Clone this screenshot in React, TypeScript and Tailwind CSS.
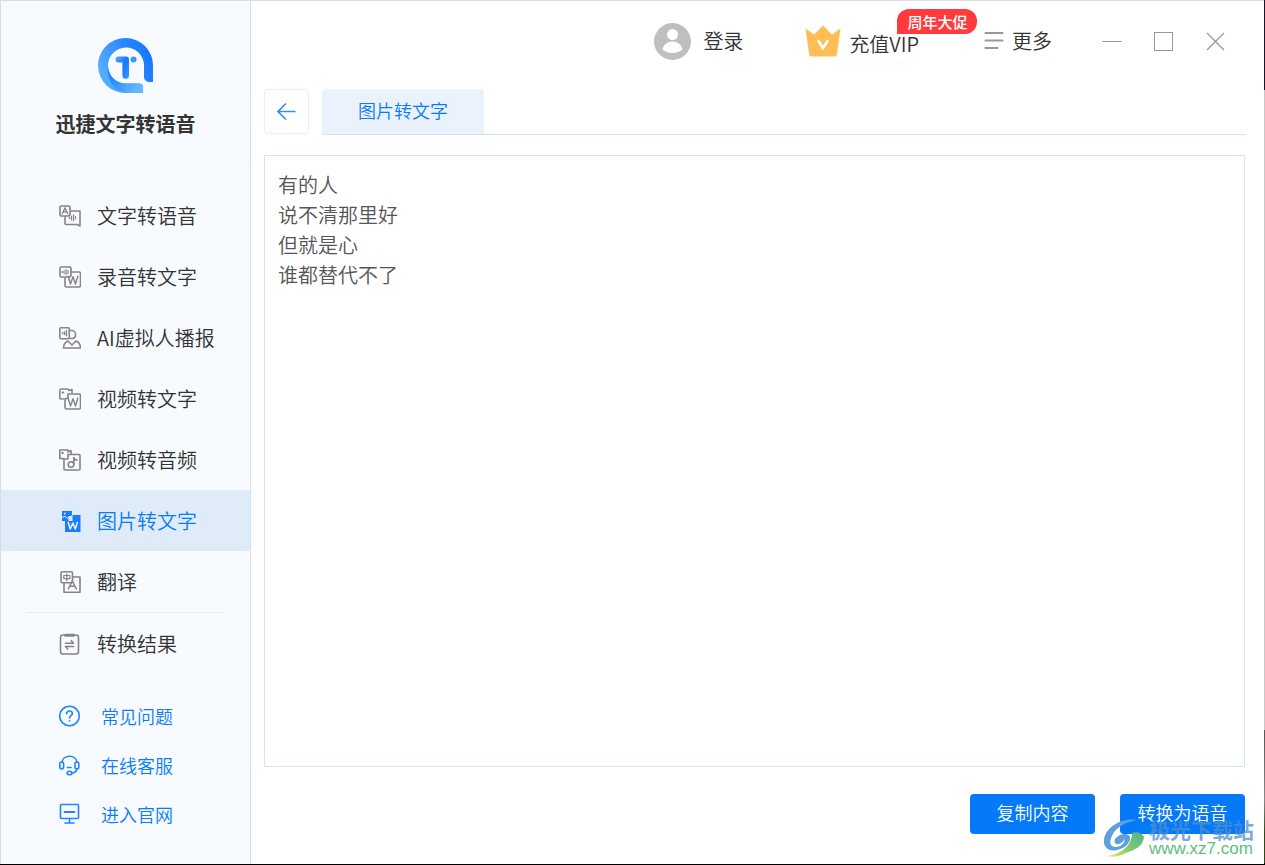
import React, { useState } from "react"

type IconProps = { children: React.ReactNode; className?: string }

const Glyph = ({ children, className = "text-[#858585]" }: IconProps) => (
  <svg
    viewBox="0 0 22 22"
    className={`size-[22px] shrink-0 ${className}`}
    fill="none"
    stroke="currentColor"
    strokeWidth="1.6"
    strokeLinejoin="round"
    strokeLinecap="round"
    aria-hidden="true"
  >
    {children}
  </svg>
)

const W_MARK = "M9.2 10.200l2.300 7.800 2.500-7.300 2.500 7.300 2.300-7.800"

const SpeechIcon = () => (
  <Glyph>
    <path d="M11 5V2a1 1 0 0 0-1-1H2a1 1 0 0 0-1 1v8a1 1 0 0 0 1 1h3" />
    <path d="M11 6h10v15l-3-1.500H7a1 1 0 0 1-1-1V11h3a2 2 0 0 0 2-2z" />
    <path d="M3.300 8.700L6 2.800l2.700 5.900M4.500 6.900h3" strokeWidth="1.300" />
    <path d="M10.500 12v1.500M12.500 11v4M14.500 9.800v6M16.500 11.500v2.500" strokeWidth="1.200" />
  </Glyph>
)

const RecordIcon = () => (
  <Glyph>
    <path d="M12 6V2a1 1 0 0 0-1-1H2a1 1 0 0 0-1 1v8a1 1 0 0 0 1 1h3" />
    <path d="M12 6h8a1.500 1.500 0 0 1 1.500 1.500v12A1.500 1.500 0 0 1 20 21H7.500A1.500 1.500 0 0 1 6 19.500V11h4a2 2 0 0 0 2-2z" />
    <path d="M3 5.500v1M5 4.500v3M7 3.500v5M9 4.500v3" strokeWidth="1.200" />
    <path d={W_MARK} strokeWidth="1.400" />
  </Glyph>
)

const AvatarIcon = () => (
  <Glyph>
    <rect x="0.800" y="0.800" width="9.500" height="11" rx="1" />
    <path d="M11 3.500h2a4 4 0 0 1 3.500 4.300c0 2.200-1.500 3.700-3.500 3.700h-2" />
    <path d="M4.500 21c0-3 2-6 4.500-7l4 4 4-4c2.500 1 4.500 4 4.500 7z" />
    <path d="M3.500 5.800v1M5.500 5v2.600M7.500 3.800v5" strokeWidth="1.400" />
  </Glyph>
)

const VideoTextIcon = () => (
  <Glyph>
    <path d="M4.500 11H2a1.500 1.500 0 0 1-1.200-1.500v-7A1.500 1.500 0 0 1 2.300 1h6A1.500 1.500 0 0 1 9.800 2.500L13 1.500V5" />
    <path d="M6 11l3-1V6h11a1.500 1.500 0 0 1 1.500 1.500v12A1.500 1.500 0 0 1 20 21H7.500A1.500 1.500 0 0 1 6 19.500z" />
    <path d="M3.500 4.500h.8" strokeWidth="2" />
    <path d={W_MARK} strokeWidth="1.400" />
  </Glyph>
)

const VideoAudioIcon = () => (
  <Glyph>
    <path d="M4 9.500H.800V1H9v2l3-1.500V5" />
    <path d="M4 10h5V5.500h11a1 1 0 0 1 1 1V20a1 1 0 0 1-1 1H6a1 1 0 0 1-1-1V10" />
    <path d="M3.200 4h.8" strokeWidth="1.800" />
    <circle cx="12" cy="15.500" r="2.800" />
    <path d="M14.800 15.500V8.500c.5 1.500 1.500 2.500 3.200 2.800" />
  </Glyph>
)

const PictureIcon = () => (
  <Glyph className="text-[#1a7cff]">
    <path d="M3 1h10v5H9.500v5H3z" fill="currentColor" stroke="none" />
    <path d="M13.500 5H21.500v17H6V11h7.500z" fill="currentColor" stroke="none" />
    <path d="M3 7.500l3-1.200 2.500 2 4-2.300" stroke="#dfebf8" strokeWidth="1" />
    <circle cx="5.800" cy="3.500" r=".9" fill="#dfebf8" stroke="none" />
    <path d="M9.300 12.500l2 6.500 2.500-6 2.500 6 2-6.500" stroke="#e8f1ff" strokeWidth="1.600" />
  </Glyph>
)

const TranslateIcon = () => (
  <Glyph>
    <rect x="2" y=".8" width="11.500" height="11" rx="1.500" />
    <path d="M13.500 6H21v15.200H5V12" />
    <path d="M4.800 4.500h6v3.200h-6zM7.800 2.800v7" strokeWidth="1.200" />
    <path d="M9.300 17.800L13.300 10l4 7.800M11 15.300h4.800" strokeWidth="1.500" />
  </Glyph>
)

const ResultIcon = () => (
  <Glyph>
    <rect x="1.500" y="2" width="18" height="19" rx="2.500" />
    <path d="M6.500 2.300h8" strokeWidth="3" />
    <path d="M6.500 10.200h8l-2.200-2.500M14.500 13.500h-8l2.200 2.500" />
  </Glyph>
)

const HelpIcon = () => (
  <Glyph className="text-[#2084fa]">
    <circle cx="10.500" cy="11" r="9.800" />
    <path d="M7.600 8.800c0-1.700 1.300-2.800 2.900-2.800s2.900 1.100 2.900 2.700c0 1.900-2.900 2.100-2.900 4.300M10.500 15.800v.2" />
  </Glyph>
)

const ServiceIcon = () => (
  <Glyph className="text-[#2084fa]">
    <path d="M3 8a7.600 6.800 0 0 1 15 0M18 15c-.8 2.500-2.800 4-5 4.300" />
    <rect x=".8" y="8" width="3.800" height="7" rx="1.900" />
    <rect x="16" y="8" width="3.800" height="7" rx="1.900" />
    <path d="M8.500 13.500h3.500" />
    <ellipse cx="10.500" cy="19" rx="2.300" ry="1.800" />
  </Glyph>
)

const SiteIcon = () => (
  <Glyph className="text-[#2084fa]">
    <rect x="1.500" y="1.500" width="18" height="14" rx="1" />
    <path d="M5.500 9h10" strokeWidth="1.800" />
    <path d="M10.500 15.500v4M6 20h9" />
  </Glyph>
)

const navItems = [
  { label: "文字转语音", Icon: SpeechIcon },
  { label: "录音转文字", Icon: RecordIcon },
  { label: "AI虚拟人播报", Icon: AvatarIcon },
  { label: "视频转文字", Icon: VideoTextIcon },
  { label: "视频转音频", Icon: VideoAudioIcon },
  { label: "图片转文字", Icon: PictureIcon },
  { label: "翻译", Icon: TranslateIcon },
  { label: "转换结果", Icon: ResultIcon },
]

const helpLinks = [
  { label: "常见问题", Icon: HelpIcon },
  { label: "在线客服", Icon: ServiceIcon },
  { label: "进入官网", Icon: SiteIcon },
]

const Logo = () => (
  <svg viewBox="0 0 56 56" className="size-14" aria-hidden="true">
    <defs>
      <linearGradient id="ring" x1="0" y1="0.700" x2="1" y2="0.300">
        <stop offset="0" stopColor="#5db4ff" />
        <stop offset="0.600" stopColor="#2c86ff" />
        <stop offset="1" stopColor="#1577ff" />
      </linearGradient>
      <linearGradient id="tail" x1="0" y1="0" x2="1" y2="0.400">
        <stop offset="0" stopColor="#1577ff" />
        <stop offset="1" stopColor="#62b8ff" />
      </linearGradient>
      <linearGradient id="stem" x1="0" y1="0" x2="1" y2="1">
        <stop offset="0" stopColor="#55a8ff" />
        <stop offset="0.500" stopColor="#1577ff" />
        <stop offset="1" stopColor="#3f97ff" />
      </linearGradient>
    </defs>
    <path
      d="M55 44h-4a5 5 0 0 1-5-5V27A18 18 0 1 0 28 45.500h13a4 4 0 0 1 4 4V55H28A27.500 27.500 0 1 1 55 28z"
      fill="url(#ring)"
    />
    <path d="M10 29c1 10 8 16.500 18 16.500h13a4 4 0 0 1 4 4V55H28C16 53 9 42 10 29z" fill="url(#tail)" />
    <path d="M20.500 18.500H28a3 3 0 0 1 3 3v16a3.300 3.300 0 0 1-6.600 0v-13h-3.900a3 3 0 0 1 0-6z" fill="url(#stem)" />
    <circle cx="35.500" cy="21.500" r="3" fill="#3d95ff" />
  </svg>
)

const Sidebar = ({ active, onSelect }: { active: string; onSelect: (label: string) => void }) => (
  <aside className="flex w-[250px] shrink-0 flex-col border-r border-[#cfe3f8] bg-[#f7faff]">
    <div className="flex flex-col items-center pt-[37px]">
      <Logo />
      <h1 className="mt-[14px] text-xl leading-8 font-bold text-[#333]">迅捷文字转语音</h1>
    </div>

    <nav className="mt-[45px] flex h-[489px] shrink-0 flex-col">
      {navItems.map(({ label, Icon }) => (
        <React.Fragment key={label}>
          {label === "转换结果" && <hr className="mx-[25px] border-[#e1edfb]" />}
          <button
            type="button"
            onClick={() => onSelect(label)}
            className={`flex flex-1 items-center gap-4 pl-[58px] text-xl ${
              label === active ? "bg-[#dfebf8] text-[#0a7cf8]" : "text-[#333]"
            }`}
          >
            <Icon />
            {label}
          </button>
        </React.Fragment>
      ))}
    </nav>

    <div className="mt-[17px] flex flex-col text-lg text-[#0a7cf8]">
      {helpLinks.map(({ label, Icon }) => (
        <a key={label} href="#" className="flex h-[49px] items-center gap-5 pl-[58px]">
          <Icon />
          {label}
        </a>
      ))}
    </div>
  </aside>
)

const TopBar = () => (
  <header className="flex h-20 items-center justify-end pr-[38px] text-xl text-[#333]">
    <button type="button" className="flex items-center gap-3">
      <svg viewBox="0 0 37 37" className="size-[37px]" aria-hidden="true">
        <circle cx="18.500" cy="18.500" r="18.500" fill="#bfbfbf" />
        <circle cx="18.500" cy="11.500" r="5.500" fill="#fff" />
        <path d="M8.500 26.500c1-5 5-8 10-8s9 3 10 8c-5 4.500-15 4.500-20 0z" fill="#fff" />
      </svg>
      登录
    </button>

    <button type="button" className="relative ml-[62px] flex items-start gap-2">
      <svg viewBox="0 0 36 32" className="h-8 w-9" aria-hidden="true">
        <path
          d="M.5 3.500l8.500 6L18 .5l9 9 8.500-6-3.500 25a3 3 0 0 1-3 3H7a3 3 0 0 1-3-3z"
          fill="#ffbe55"
        />
        <path d="M13.500 16l4.500 7 4.500-7" fill="none" stroke="#fff" strokeWidth="2.600" strokeLinecap="round" />
      </svg>
      <span className="pt-[5px]">充值VIP</span>
      <span className="absolute bottom-6 left-[92px] rounded-xl rounded-bl-none bg-[#ff3b3e] px-[10px] text-[15px] leading-[25px] font-medium whitespace-nowrap text-white">
        周年大促
      </span>
    </button>

    <button type="button" className="ml-[65px] flex items-center gap-2">
      <svg viewBox="0 0 20 20" className="size-5" stroke="#999" strokeWidth="2.200" strokeLinecap="round" aria-hidden="true">
        <path d="M1.500 2h17M1.500 9.500h17M1.500 17h12" />
      </svg>
      更多
    </button>

    <div className="ml-[50px] flex items-center gap-8">
      <button type="button" aria-label="最小化">
        <svg viewBox="0 0 20 20" className="size-5" stroke="#999" aria-hidden="true">
          <path d="M.5 10.500h19" />
        </svg>
      </button>
      <button type="button" aria-label="最大化">
        <svg viewBox="0 0 20 20" className="size-5" fill="none" stroke="#999" aria-hidden="true">
          <rect x=".5" y="1.500" width="18" height="18" />
        </svg>
      </button>
      <button type="button" aria-label="关闭">
        <svg viewBox="0 0 20 20" className="size-5" stroke="#999" strokeWidth="1.300" aria-hidden="true">
          <path d="M1 2l17 17M18 2L1 19" />
        </svg>
      </button>
    </div>
  </header>
)

const SiteMark = () => (
  <div className="pointer-events-none absolute right-[10px] bottom-[5px] flex items-end gap-1">
    <svg viewBox="0 0 42 40" className="h-10 w-[42px]" aria-hidden="true">
      <defs>
        <linearGradient id="swirl" x1="0.900" y1="0" x2="0.100" y2="1">
          <stop offset="0" stopColor="#54b48c" />
          <stop offset="0.600" stopColor="#84cc6c" />
          <stop offset="1" stopColor="#e8e36a" />
        </linearGradient>
      </defs>
      <path
        d="M34 1C18-2 2 9 1 21c-1 8 6 12 13 10 9-2 14-8 13-13-1-4-9-4-13 0-4 3-3 8 2 7 3-1 5-3 5-5 2 3-3 8-8 8-6 0-7-5-4-11C12 9 22 3 34 1z"
        fill="#619fdc"
      />
      <path d="M4 37c15-2 25-11 25-23 5-2 10 0 12 4-1 10-10 13-18 16-6 3-12 5-19 3z" fill="url(#swirl)" />
    </svg>
    <div className="flex flex-col">
      <span className="text-[21px] leading-5 font-bold text-[#4f8fd0]/75">极光下载站</span>
      <span className="font-['Liberation_Sans',sans-serif] text-[17px] leading-5 text-[#5cc080]">www.xz7.com</span>
    </div>
  </div>
)

const App = () => {
  const [active, setActive] = useState("图片转文字")
  const [text, setText] = useState("有的人\n说不清那里好\n但就是心\n谁都替代不了")

  return (
    <div className="h-screen bg-[linear-gradient(#14182a_90px,#c8c8c8_90px,#c8c8c8_730px,#555_730px,#888_800px,#2a4a12_834px,#2a4a12_863px,#000_863px)] pr-px pb-px font-['Noto_Sans_CJK_SC',sans-serif] font-[350]">
      <div className="relative flex h-full border-t border-l border-[#dcdcdc] bg-white">
        <Sidebar active={active} onSelect={setActive} />

        <main className="flex min-w-0 flex-1 flex-col">
          <TopBar />

          <div className="mt-2 flex gap-[13px] pr-[18px] pl-[13px]">
            <button
              type="button"
              aria-label="返回"
              className="flex size-[45px] items-center justify-center rounded-[4px] border border-[#e3effc]"
            >
              <svg viewBox="0 0 20 20" className="size-5" fill="none" stroke="#3391fa" strokeWidth="1.700" aria-hidden="true">
                <path d="M18.500 9.500H1.500M9 1.500l-8 8 8 8" />
              </svg>
            </button>
            <div className="flex flex-1 border-b border-[#cfe3f8]">
              <button
                type="button"
                className="h-[45px] w-[162px] rounded-t-[4px] bg-[#eaf2fe] pb-1 text-lg text-[#0a7cf8]"
              >
                图片转文字
              </button>
            </div>
          </div>

          <textarea
            aria-label="识别结果"
            value={text}
            onChange={e => setText(e.target.value)}
            className="mt-5 mr-[19px] ml-[13px] flex-1 resize-none border border-[#d7e6f6] px-[13px] py-[14px] text-xl leading-[30px] text-[#555] outline-none"
          />

          <div className="mt-[27px] mr-[19px] mb-[30px] flex justify-end gap-[25px] text-lg text-white">
            <button type="button" className="h-10 w-[125px] rounded-[4px] bg-[#057af9] pb-1">
              复制内容
            </button>
            <button type="button" className="h-10 w-[125px] rounded-[4px] bg-[#057af9] pb-1">
              转换为语音
            </button>
          </div>
        </main>

        <SiteMark />
      </div>
    </div>
  )
}

export default App
